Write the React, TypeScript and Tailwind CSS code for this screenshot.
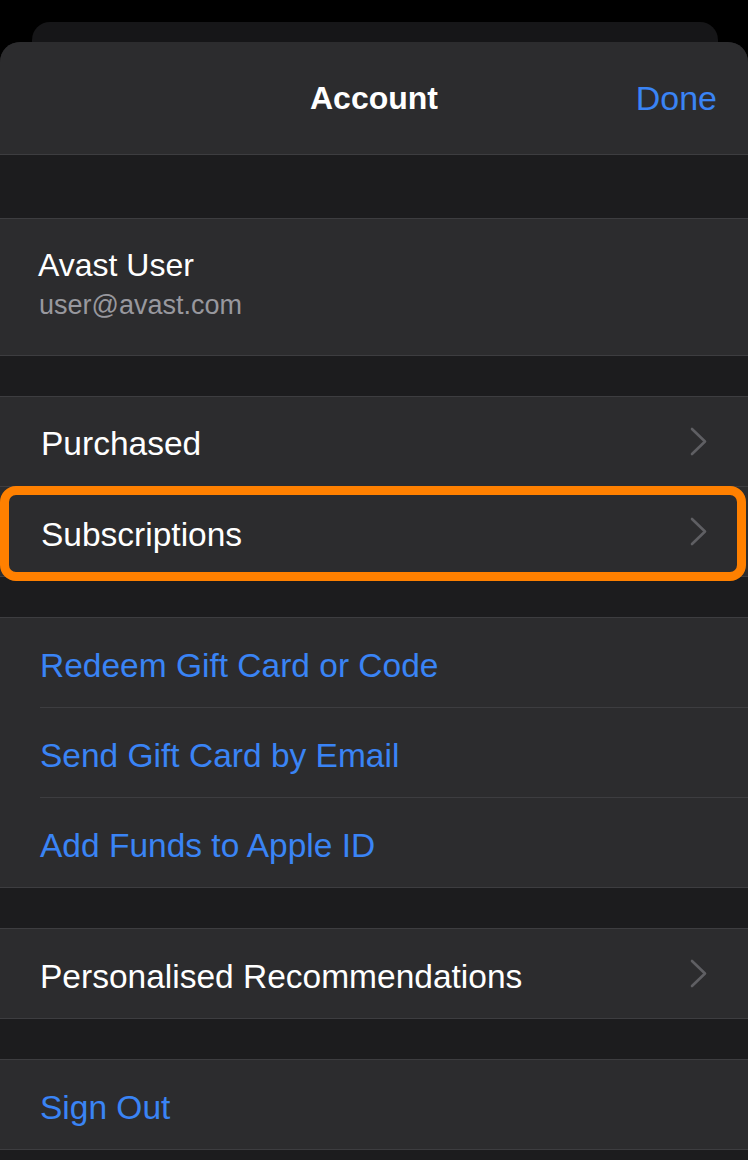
import { ReactNode } from "react";

// iOS App Store "Account" sheet, dark appearance.

const font = { fontFamily: '"Liberation Sans", Arial, sans-serif' };

function Chevron() {
  return (
    <svg width="17" height="29" viewBox="0 0 17 29" fill="none" className="shrink-0">
      <path
        d="M2 2L15 14.5L2 27"
        stroke="#5f5f63"
        strokeWidth="2.6"
        strokeLinecap="round"
        strokeLinejoin="round"
      />
    </svg>
  );
}

function Row({
  label,
  blue,
  chevron,
  divider,
}: {
  label: string;
  blue?: boolean;
  chevron?: boolean;
  divider?: boolean;
}) {
  return (
    <div className="pl-[40px]">
      <div
        className={`flex items-center justify-between pr-[41px] ${
          divider ? "h-[90px] border-b border-[#3d3d40]" : "h-[89px]"
        }`}
      >
        <span
          className={`pt-[6px] text-[33.5px] leading-none ${
            blue ? "text-[#3a84f5]" : "text-white"
          }`}
        >
          {label}
        </span>
        {chevron && <Chevron />}
      </div>
    </div>
  );
}

function Group({ children }: { children: ReactNode }) {
  return (
    <div className="border-y border-[#3d3d40] bg-[#2c2c2e]">{children}</div>
  );
}

export default function App() {
  return (
    <div className="h-[1160px] w-[748px] overflow-hidden bg-black pt-[22px]" style={font}>
      {/* card peeking behind the sheet */}
      <div className="mx-[32px] h-[20px] w-[686px] rounded-t-[18px] bg-[#161618]" />

      <div className="h-[1118px] overflow-hidden rounded-t-[20px] bg-[#1c1c1e]">
        <header className="relative flex h-[113px] items-center justify-center border-b border-[#3d3d40] bg-[#2c2c2e]">
          <h1 className="text-[32px] font-bold leading-none text-white">Account</h1>
          <span className="absolute right-[31px] text-[34px] leading-none text-[#3a84f5]">
            Done
          </span>
        </header>

        <div className="h-[63px]" />

        <Group>
          <div className="h-[136px] pl-[38px] pt-[27px]">
            <div className="text-[32px] leading-[38px] text-white">Avast User</div>
            <div className="mt-[5px] pl-[1px] text-[27px] leading-[32px] text-[#98989e]">
              user@avast.com
            </div>
          </div>
        </Group>

        <div className="h-[40px]" />

        <Group>
          <div className="flex h-[90px] items-center justify-between border-b border-[#3d3d40] pl-[41px] pr-[41px]">
            <span className="pt-[4px] text-[33.5px] leading-none text-white">Purchased</span>
            <Chevron />
          </div>
          <div className="relative flex h-[89px] items-center justify-between pl-[41px] pr-[41px]">
            <span className="pt-[6px] text-[33.5px] leading-none text-white">Subscriptions</span>
            <Chevron />
            <div className="pointer-events-none absolute -top-[1px] -bottom-[5px] left-0 right-[2px] rounded-[16px] border-[9px] border-[#ff8000]" />
          </div>
        </Group>

        <div className="h-[40px]" />

        <Group>
          <Row label="Redeem Gift Card or Code" blue divider />
          <Row label="Send Gift Card by Email" blue divider />
          <Row label="Add Funds to Apple ID" blue />
        </Group>

        <div className="h-[40px]" />

        <Group>
          <Row label="Personalised Recommendations" chevron />
        </Group>

        <div className="h-[40px]" />

        <Group>
          <Row label="Sign Out" blue />
        </Group>
      </div>
    </div>
  );
}
